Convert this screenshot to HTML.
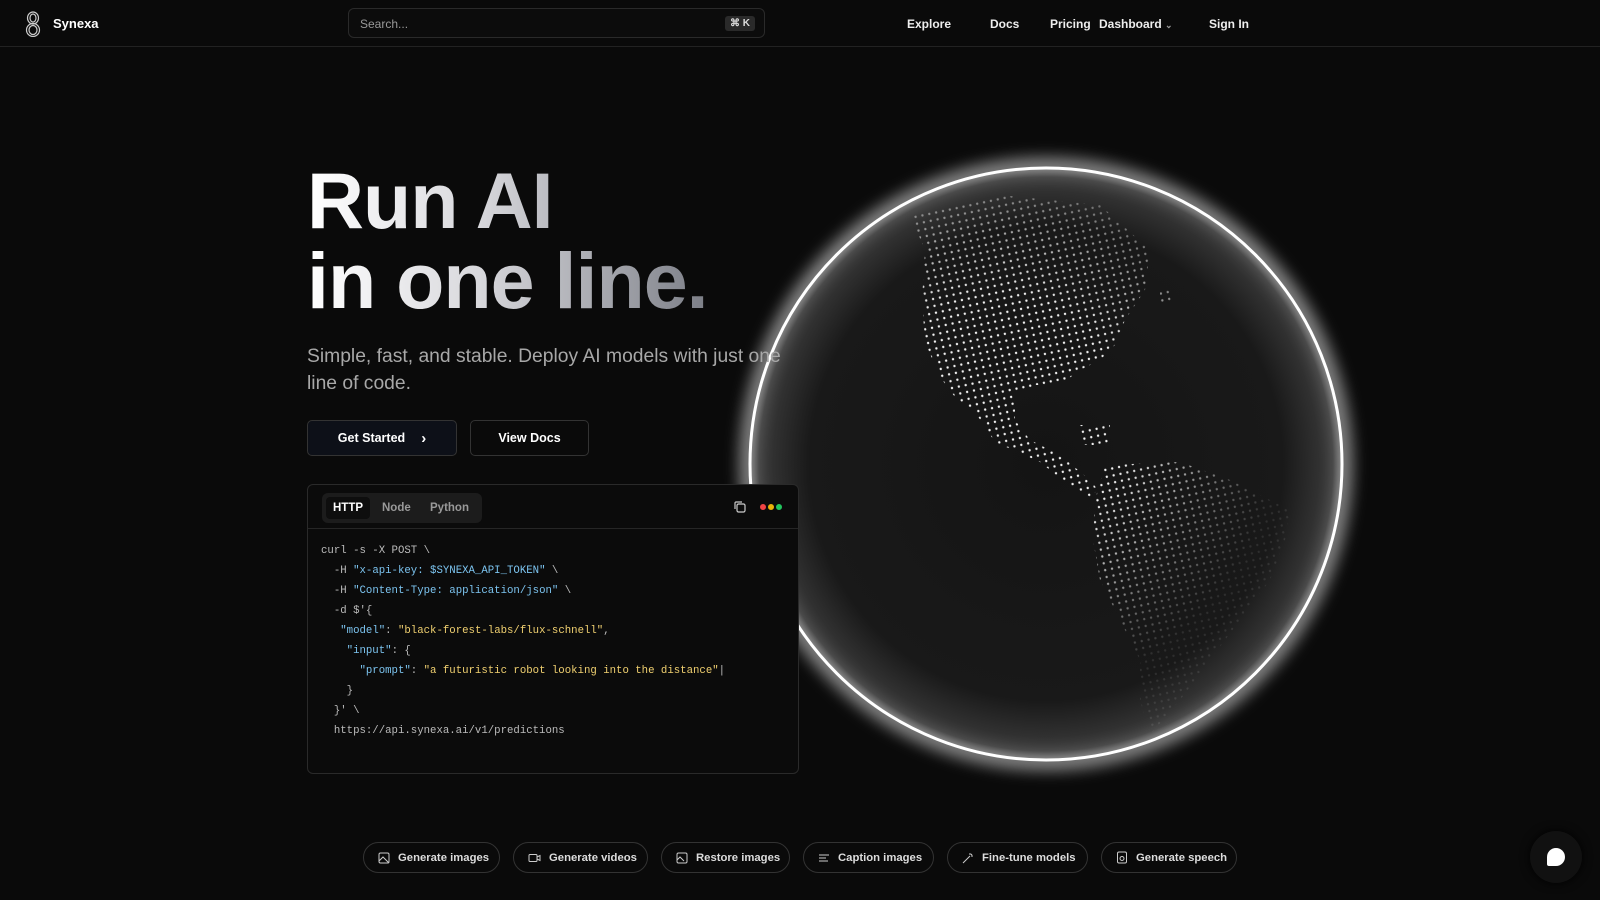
<!DOCTYPE html>
<html><head><meta charset="utf-8"><style>
*{margin:0;padding:0;box-sizing:border-box}
body{width:1600px;height:900px;background:#0a0a0a;overflow:hidden;font-family:"Liberation Sans",sans-serif;color:#fff;position:relative}
.nav{position:absolute;left:0;top:0;width:1600px;height:47px;border-bottom:1px solid #222}
.logo{position:absolute;left:25px;top:11px}
.brand{position:absolute;left:53px;top:16px;font-weight:bold;font-size:13px}
.search{position:absolute;left:348px;top:8px;width:417px;height:30px;border:1px solid #2a2a2a;border-radius:6px;background:#0c0c0c}
.search span{position:absolute;left:11px;top:8px;font-size:12px;color:#999}
.kbd{position:absolute;right:9px;top:7px;background:#2a2a2a;border-radius:3px;font-size:10px;padding:2px 5px;color:#ddd;font-weight:bold}
.nl{position:absolute;top:17px;font-size:12px;font-weight:bold;color:#eee}
h1{position:absolute;left:307px;top:161px;font-size:79px;line-height:80px;font-weight:bold;letter-spacing:-1px;background:linear-gradient(90deg,#fff 0%,#d8d8dc 40%,#70737c 100%);-webkit-background-clip:text;background-clip:text;color:transparent;width:430px}
.sub{position:absolute;left:307px;top:343px;font-size:19.3px;line-height:27px;color:#a8a8a8;width:500px;z-index:3}
.btn{position:absolute;top:420px;height:36px;border:1px solid #333;border-radius:5px;font-size:12.5px;font-weight:bold;display:flex;align-items:center;justify-content:center;z-index:3}
.code{position:absolute;left:307px;top:484px;width:492px;height:290px;border:1px solid #2a2a2a;border-radius:6px;background:#0b0b0b;z-index:3}
.tabs{position:absolute;left:14px;top:8px;height:30px;width:160px;background:#1c1c1c;border-radius:6px}
.tab{position:absolute;top:4px;height:22px;font-size:11.5px;font-weight:bold;color:#999;line-height:22px}
.pre{position:absolute;left:13px;top:56px;font-family:"Liberation Mono",monospace;font-size:10.7px;line-height:20px;color:#bbb;white-space:pre}
.k{color:#7cc4f0}.s{color:#f0d070}
.pill{position:absolute;top:842px;height:31px;border:1px solid #333;border-radius:16px;font-size:11.3px;font-weight:bold;color:#ddd;display:flex;align-items:center;padding-left:14px;gap:8px}
.pill svg{flex:none}
</style></head><body>
<div class="nav">
<svg class="logo" width="16" height="26" viewBox="0 0 16 26" fill="none" stroke="#ccc" stroke-width="1.2"><ellipse cx="8" cy="7" rx="5.5" ry="6"/><ellipse cx="8" cy="19" rx="6.5" ry="6.5"/><ellipse cx="8" cy="7" rx="3" ry="4"/><ellipse cx="8" cy="19" rx="4" ry="4.5"/></svg>
<div class="brand">Synexa</div>
<div class="search"><span>Search...</span><div class="kbd">⌘ K</div></div>
<div class="nl" style="left:907px">Explore</div>
<div class="nl" style="left:990px">Docs</div>
<div class="nl" style="left:1050px">Pricing</div>
<div class="nl" style="left:1099px">Dashboard <span style="font-size:9px;color:#999">⌄</span></div>
<div class="nl" style="left:1209px">Sign In</div>
</div>

<svg style="position:absolute;left:0;top:0" width="1600" height="900">
<defs>
<radialGradient id="gb" cx="0.5" cy="0.5" r="0.5"><stop offset="0" stop-color="#141414"/><stop offset="0.8" stop-color="#191919"/><stop offset="0.97" stop-color="#3a3a3a"/><stop offset="1" stop-color="#777"/></radialGradient>
<pattern id="dots" width="7" height="7" patternUnits="userSpaceOnUse" patternTransform="rotate(-12)"><circle cx="3.5" cy="3.5" r="1.2" fill="#f2f2f2"/></pattern>
<radialGradient id="fm" cx="1000" cy="420" r="280" gradientUnits="userSpaceOnUse"><stop offset="0.45" stop-color="#fff"/><stop offset="1" stop-color="#fff" stop-opacity="0.1"/></radialGradient>
<mask id="m"><rect width="1600" height="900" fill="url(#fm)"/></mask>
<filter id="bl" x="-20%" y="-20%" width="140%" height="140%"><feGaussianBlur stdDeviation="9"/></filter>
</defs>
<circle cx="1046" cy="464" r="296" fill="none" stroke="#fff" stroke-width="14" opacity="0.6" filter="url(#bl)"/>
<circle cx="1046" cy="464" r="296" fill="url(#gb)"/>
<g fill="url(#dots)" mask="url(#m)">
<path d="M910 215 L1000 195 L1100 205 L1150 250 L1145 290 L1125 320 L1115 345 L1100 360 L1080 370 L1060 385 L1035 385 L1015 395 L1015 420 L1030 440 L1060 455 L1090 480 L1098 490 L1090 497 L1065 482 L1040 462 L995 442 L975 412 L955 397 L940 377 L925 342 L922 300 L925 250Z"/>
<path d="M1105 465 L1180 462 L1230 480 L1290 510 L1285 540 L1270 580 L1240 620 L1210 660 L1180 700 L1150 735 L1140 700 L1140 660 L1120 620 L1100 580 L1093 540 L1095 500Z"/>
<path d="M1160 290 h12 v12 h-12z M1080 425 h30 v20 h-30z"/>
</g>
<circle cx="1046" cy="464" r="296" fill="none" stroke="#fff" stroke-width="3"/>
<circle cx="1046" cy="464" r="296" fill="none" stroke="#fff" stroke-width="6" opacity="0.5" filter="url(#bl)"/>
</svg>

<h1>Run AI<br>in one line.</h1>
<div class="sub">Simple, fast, and stable. Deploy AI models with just one line of code.</div>
<div class="btn" style="left:307px;width:150px;background:#0d1018">Get Started <span style="margin-left:16px;font-size:15px">›</span></div>
<div class="btn" style="left:470px;width:119px;background:#0a0a0a">View Docs</div>

<div class="code">
<div class="tabs"><div class="tab" style="left:4px;width:44px;background:#0e0e0e;border-radius:4px;color:#fff;text-align:center">HTTP</div><div class="tab" style="left:60px">Node</div><div class="tab" style="left:108px">Python</div></div>
<svg style="position:absolute;left:425px;top:15px" width="14" height="14" viewBox="0 0 14 14" fill="none" stroke="#ccc" stroke-width="1.2"><rect x="4" y="4" width="8" height="8" rx="1.5"/><path d="M2 9V3a1 1 0 0 1 1-1h6"/></svg>
<svg style="position:absolute;left:451px;top:18px" width="28" height="8"><circle cx="4" cy="4" r="3" fill="#ef4444"/><circle cx="12" cy="4" r="3" fill="#eab308"/><circle cx="20" cy="4" r="3" fill="#22c55e"/></svg>
<div style="position:absolute;left:0;top:43px;width:100%;border-top:1px solid #262626"></div>
<div class="pre">curl -s -X POST \
  -H <span class="k">"x-api-key: $SYNEXA_API_TOKEN"</span> \
  -H <span class="k">"Content-Type: application/json"</span> \
  -d $'{
   <span class="k">"model"</span>: <span class="s">"black-forest-labs/flux-schnell"</span>,
    <span class="k">"input"</span>: {
      <span class="k">"prompt"</span>: <span class="s">"a futuristic robot looking into the distance"</span>|
    }
  }' \
  https://api.synexa.ai/v1/predictions</div>
</div>

<div class="pill" style="left:363px;width:137px"><svg width="12" height="12" viewBox="0 0 12 12" fill="none" stroke="#ccc"><rect x="1" y="1" width="10" height="10" rx="1.5"/><path d="M1 9l4-4 6 6"/></svg>Generate images</div>
<div class="pill" style="left:513px;width:135px"><svg width="13" height="12" viewBox="0 0 13 12" fill="none" stroke="#ccc"><rect x="1" y="2.5" width="8" height="7" rx="1"/><path d="M9 5l3-1.5v5L9 7"/></svg>Generate videos</div>
<div class="pill" style="left:661px;width:129px"><svg width="12" height="12" viewBox="0 0 12 12" fill="none" stroke="#ccc"><rect x="1" y="1" width="10" height="10" rx="1.5"/><path d="M1 8l3-3 4 4"/></svg>Restore images</div>
<div class="pill" style="left:803px;width:131px"><svg width="12" height="12" viewBox="0 0 12 12" stroke="#ccc"><path d="M1 3h10M1 6h7M1 9h9"/></svg>Caption images</div>
<div class="pill" style="left:947px;width:141px"><svg width="12" height="12" viewBox="0 0 12 12" fill="none" stroke="#ccc"><path d="M1 11l7-7M8 1v2M11 4H9M10 2l-1 1"/></svg>Fine-tune models</div>
<div class="pill" style="left:1101px;width:136px"><svg width="12" height="13" viewBox="0 0 12 13" fill="none" stroke="#ccc"><rect x="1.5" y="1" width="9" height="11" rx="1.5"/><circle cx="6" cy="7.5" r="2"/></svg>Generate speech</div>

<div style="position:absolute;left:1530px;top:831px;width:52px;height:52px;border-radius:50%;background:#111;box-shadow:0 0 10px #000"></div>
<div style="position:absolute;left:1547px;top:848px;width:18px;height:18px;border-radius:9px 9px 9px 2px;background:#fff"></div>
</body></html>
